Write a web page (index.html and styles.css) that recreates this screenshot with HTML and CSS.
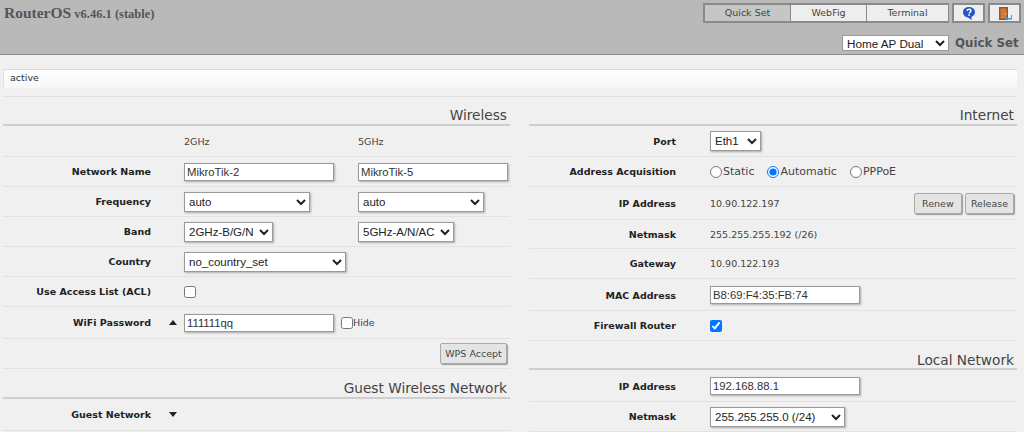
FILE: index.html
```html
<!DOCTYPE html>
<html lang="en">

<head>
    <meta charset="UTF-8">
    <meta name="viewport" content="width=device-width, initial-scale=1.0">
    <title>RouterOS</title>
    <link rel="stylesheet" href="styles.css">
</head>

<body>
    <header id="top-bar">
        <div class="top-line">
            <div class="brand"><b>RouterOS</b> <span>v6.46.1 (stable)</span></div>
            <nav class="tabs">
                <a href="#" class="tab tab-quick active">Quick Set</a>
                <a href="#" class="tab tab-web">WebFig</a>
                <a href="#" class="tab tab-term">Terminal</a>
                <a href="#" class="tab-icon">
                    <svg width="14" height="15" viewBox="0 0 14 15">
                        <path d="M7 1C3.500 1 1 3.200 1 6.200c0 2.900 2.200 5 5 5.200L9.500 14v-3.200C11.700 10 13 8.300 13 6.200 13 3.200 10.500 1 7 1z" fill="#2456c8"/>
                        <path d="M5 4.900C5.200 3.800 6 3.300 7 3.300c1.200 0 1.900.7 1.900 1.600 0 1.400-1.800 1.300-1.800 2.700" fill="none" stroke="#fff" stroke-width="1.400"/>
                        <rect x="6.300" y="8.300" width="1.600" height="1.600" fill="#fff"/>
                    </svg>
                </a>
                <a href="#" class="tab-icon">
                    <svg width="14" height="15" viewBox="0 0 14 15">
                        <rect x="1" y="1" width="9" height="13" fill="#9c5224"/>
                        <rect x="2.500" y="2.500" width="6" height="10" fill="#cf7a3c"/>
                        <circle cx="7.500" cy="8" r=".8" fill="#f0d060"/>
                        <path d="M13 9v3H9v-1.500L6.500 12.500 9 14.500V13.500h5V9z" fill="#3a9ad8"/>
                    </svg>
                </a>
            </nav>
        </div>
        <div class="mode-line">
            <select class="mode-select">
                <option>Home AP Dual</option>
            </select>
            <span class="mode-title">Quick Set</span>
        </div>
    </header>

    <div class="status">active</div>

    <main class="columns">
        <section class="col col-left">
            <h2 class="heading">Wireless</h2>
            <div class="row row-first band-head">
                <div class="label"></div>
                <div class="cell cell-band">2GHz</div>
                <div class="cell">5GHz</div>
            </div>
            <div class="row">
                <div class="label">Network Name</div>
                <div class="cell cell-band"><input class="text-in" type="text" value="MikroTik-2"></div>
                <div class="cell"><input class="text-in" type="text" value="MikroTik-5"></div>
            </div>
            <div class="row">
                <div class="label">Frequency</div>
                <div class="cell cell-band"><select class="sel sel-freq"><option>auto</option></select></div>
                <div class="cell"><select class="sel sel-freq"><option>auto</option></select></div>
            </div>
            <div class="row">
                <div class="label">Band</div>
                <div class="cell cell-band"><select class="sel sel-band"><option>2GHz-B/G/N</option></select></div>
                <div class="cell"><select class="sel sel-band5"><option>5GHz-A/N/AC</option></select></div>
            </div>
            <div class="row">
                <div class="label">Country</div>
                <div class="cell"><select class="sel sel-country"><option>no_country_set</option></select></div>
            </div>
            <div class="row">
                <div class="label">Use Access List (ACL)</div>
                <div class="cell"><input class="check" type="checkbox"></div>
            </div>
            <div class="row row-tall">
                <div class="label">WiFi Password</div>
                <span class="tri tri-up"></span>
                <div class="cell"><input class="text-in" type="text" value="111111qq"></div>
                <label class="hide-opt"><input class="check" type="checkbox">Hide</label>
            </div>
            <div class="row row-end">
                <button class="btn btn-wps">WPS Accept</button>
            </div>
            <h2 class="heading heading-sub">Guest Wireless Network</h2>
            <div class="row row-tall">
                <div class="label">Guest Network</div>
                <span class="tri tri-down"></span>
            </div>
        </section>

        <section class="col col-right">
            <h2 class="heading">Internet</h2>
            <div class="row row-first">
                <div class="label">Port</div>
                <div class="cell"><select class="sel sel-port"><option>Eth1</option></select></div>
            </div>
            <div class="row">
                <div class="label">Address Acquisition</div>
                <div class="radios">
                    <label class="radio"><input type="radio" name="acq">Static</label>
                    <label class="radio"><input type="radio" name="acq" checked>Automatic</label>
                    <label class="radio"><input type="radio" name="acq">PPPoE</label>
                </div>
            </div>
            <div class="row row-taller">
                <div class="label">IP Address</div>
                <div class="cell value">10.90.122.197</div>
                <div class="btns">
                    <button class="btn">Renew</button>
                    <button class="btn">Release</button>
                </div>
            </div>
            <div class="row row-short">
                <div class="label">Netmask</div>
                <div class="cell value">255.255.255.192 (/26)</div>
            </div>
            <div class="row">
                <div class="label">Gateway</div>
                <div class="cell value">10.90.122.193</div>
            </div>
            <div class="row row-tall">
                <div class="label">MAC Address</div>
                <div class="cell"><input class="text-in" type="text" value="B8:69:F4:35:FB:74"></div>
            </div>
            <div class="row">
                <div class="label">Firewall Router</div>
                <div class="cell"><input class="check" type="checkbox" checked></div>
            </div>
            <h2 class="heading heading-sub">Local Network</h2>
            <div class="row row-tall">
                <div class="label">IP Address</div>
                <div class="cell"><input class="text-in" type="text" value="192.168.88.1"></div>
            </div>
            <div class="row">
                <div class="label">Netmask</div>
                <div class="cell"><select class="sel sel-mask"><option>255.255.255.0 (/24)</option></select></div>
            </div>
        </section>
    </main>
</body>

</html>
```

FILE: styles.css
```css
* {
    box-sizing: border-box;
}

html,
body {
    height: 432px;
    overflow: hidden;
}

body {
    margin: 0;
    background-color: #f0f0f0;
    font-family: "DejaVu Sans", Verdana, sans-serif;
    font-size: 9.5px;
    color: #333;
}

#top-bar {
    height: 55px;
    background-color: #b9b9b9;
    border-bottom: 1px solid #8c8c8c;
    padding: 3px 3px 0 4px;
}

.top-line {
    display: flex;
    justify-content: space-between;
    height: 20px;
}

.brand {
    font-family: "Liberation Serif", serif;
    color: #555;
    font-size: 12.5px;
    line-height: 20px;
}

.brand b {
    font-size: 15.5px;
}

.brand span {
    font-weight: bold;
}

.tabs {
    display: flex;
}

.tab {
    height: 20px;
    line-height: 16px;
    text-align: center;
    color: #444;
    text-decoration: none;
    background-color: #eeeeee;
    border: 2px solid #8a8a8a;
    border-left: none;
    border-right-width: 1px;
}

.tab-quick {
    width: 88px;
    border-left: 2px solid #8a8a8a;
}

.tab-web {
    width: 76px;
}

.tab-term {
    width: 82px;
}

.tab.active {
    background-color: #c6c6c6;
}

.tab-icon {
    display: flex;
    align-items: center;
    justify-content: center;
    width: 33px;
    height: 20px;
    margin-left: 3px;
    background-color: #eeeeee;
    border: 2px solid #8a8a8a;
}

.mode-line {
    display: flex;
    justify-content: flex-end;
    align-items: center;
    gap: 6px;
    margin-top: 12px;
}

.mode-select {
    width: 107px;
    height: 16px;
    padding: 0;
    font-family: "Liberation Sans", Arial, sans-serif;
    font-size: 11.7px;
    color: #222;
    background-color: #fff;
    border: 1px solid #999;
    border-radius: 0;
}

.mode-title {
    width: 66px;
    font-size: 11.8px;
    font-weight: bold;
    color: #555;
    white-space: nowrap;
}

.status {
    height: 19px;
    margin: 14px 7px 0 3px;
    padding-left: 6px;
    line-height: 15px;
    color: #333;
    background: linear-gradient(#ffffff, #f7f7f7);
    border-top: 1px solid #dadada;
    border-left: 1px solid #e2e2e2;
}

.columns {
    display: grid;
    grid-template-columns: 507px 488px;
    gap: 19px;
    margin: 8px 7px 0 3px;
    border-top: 1px solid #e0e0e0;
}

.heading {
    height: 29px;
    margin: 0;
    padding: 10px 3px 0 0;
    text-align: right;
    font-size: 13.7px;
    line-height: 17px;
    font-weight: normal;
    color: #444;
    border-bottom: 2px solid #cfcfcf;
}

.heading-sub {
    height: 30px;
    padding-top: 11px;
    padding-right: 3px;
}

.col-right .heading-sub {
    height: 29px;
}

.row {
    display: flex;
    align-items: center;
    height: 30px;
    border-bottom: 1px solid #e2e2e2;
}

.row-first {
    height: 31px;
}

.row-short {
    height: 29px;
}

.row-tall {
    height: 32px;
}

.row-taller {
    height: 33px;
}

.col-right .row-tall,
.col-right .row-taller {
    padding-top: 1px;
}

.row-end {
    justify-content: flex-end;
    padding-right: 3px;
}

.label {
    flex: none;
    width: 148px;
    margin-right: 33px;
    text-align: right;
    font-weight: bold;
    color: #222;
}

.col-right .label {
    width: 147px;
    margin-right: 34px;
}

.cell-band {
    width: 174px;
}

.band-head {
    color: #444;
}

.value {
    color: #444;
}

.text-in {
    display: block;
    width: 150px;
    height: 18px;
    padding: 0 2px;
    font-family: "Liberation Sans", Arial, sans-serif;
    font-size: 11.3px;
    color: #333;
    background-color: #fff;
    border: 1px solid #999;
    border-radius: 0;
    box-shadow: 1px 1px 2px #aaa;
}

.sel {
    display: block;
    height: 20px;
    padding: 0;
    font-family: "Liberation Sans", Arial, sans-serif;
    font-size: 11.5px;
    color: #222;
    background-color: #fff;
    border: 1px solid #999;
    border-radius: 0;
    box-shadow: 1px 1px 2px #aaa;
}

.sel-freq {
    width: 126px;
}

.sel-band {
    width: 89px;
}

.sel-band5 {
    width: 96px;
}

.sel-country {
    width: 162px;
}

.sel-port {
    width: 51px;
}

.sel-mask {
    width: 135px;
}

.check {
    display: block;
    width: 12px;
    height: 12px;
    margin: 0;
}

.tri {
    width: 0;
    height: 0;
    margin-left: -15px;
    margin-right: 7px;
    border-left: 4px solid transparent;
    border-right: 4px solid transparent;
}

.tri-up {
    border-bottom: 5px solid #222;
}

.tri-down {
    border-top: 5px solid #222;
}

.hide-opt {
    display: flex;
    align-items: center;
    margin-left: 7px;
    color: #444;
}

.radios {
    display: flex;
    gap: 13px;
    font-size: 11px;
    color: #444;
}

.radio {
    display: flex;
    align-items: center;
}

.radio input {
    width: 12px;
    height: 12px;
    margin: 0 1px 0 0;
}

.btns {
    display: flex;
    gap: 3px;
    margin-left: auto;
    margin-right: 3px;
}

.btn {
    height: 21px;
    padding: 0 5px;
    font-family: "DejaVu Sans", Verdana, sans-serif;
    font-size: 9.5px;
    color: #444;
    background-color: #e4e4e4;
    border: 1px solid #aaa;
    border-radius: 2px;
    box-shadow: 1px 1px 1px #999;
}

.btn-wps {
    width: 67px;
    padding: 0;
}

.btns .btn {
    min-width: 48px;
}
```
